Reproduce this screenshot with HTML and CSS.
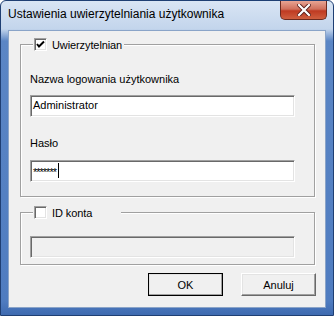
FILE: index.html
```html
<!DOCTYPE html>
<html lang="pl">
<head>
  <meta charset="UTF-8">
  <title>Ustawienia uwierzytelniania użytkownika</title>
  <link rel="stylesheet" href="styles.css">
</head>
<body>
  <div class="window">
    <div class="titlebar">
      <span class="title">Ustawienia uwierzytelniania użytkownika</span>
      <div class="close">
        <svg width="14" height="12" viewBox="0 0 14 12">
          <path d="M2 1 L12 11 M12 1 L2 11" stroke="#5a1e1a" stroke-width="4" stroke-linecap="square"/>
          <path d="M2 1 L12 11 M12 1 L2 11" stroke="#ffffff" stroke-width="2.2" stroke-linecap="square"/>
        </svg>
      </div>
    </div>

    <div class="client">
      <fieldset class="group auth">
        <legend>
          <span class="check">
            <svg width="9" height="9" viewBox="0 0 9 9">
              <path d="M1 4 L3 6.5 L8 1.5" stroke="#000" stroke-width="2" fill="none"/>
            </svg>
          </span>
          <span class="legend-text">Uwierzytelnian</span>
        </legend>
        <label class="caption">Nazwa logowania użytkownika</label>
        <div class="field">Administrator</div>
        <label class="caption second">Hasło</label>
        <div class="field pass"><span class="mask">*******</span><span class="caret"></span></div>
      </fieldset>

      <fieldset class="group account">
        <legend>
          <span class="check"></span>
          <span class="legend-text">ID konta</span>
        </legend>
        <div class="field disabled"></div>
      </fieldset>

      <div class="buttons">
        <button class="btn default">OK</button>
        <button class="btn">Anuluj</button>
      </div>
    </div>
  </div>
</body>
</html>
```

FILE: styles.css
```css
body { margin: 0; background: #ffffff; font-family: "Liberation Sans", Arial, sans-serif; font-size: 11px; color: #000; }

.window { width: 334px; height: 316px; display: flex; flex-direction: column; box-sizing: border-box;
  background: linear-gradient(to bottom, #d9e5f4 0px, #c3d5ec 28px, #5b86c5 40px, #4f7cc0 300px, #3c68ae 316px);
  border: 1px solid #1f3f73; border-radius: 6px 6px 0 0; }

.titlebar { height: 29px; display: flex; align-items: flex-start; padding-left: 7px; flex-shrink: 0; }
.title { font-size: 12px; margin-top: 6px; color: #000; }
.close { margin-left: auto; margin-right: 6px; width: 47px; height: 19px; display: flex; align-items: center; justify-content: center;
  background: linear-gradient(to bottom, #e8a493 0%, #d0705c 45%, #bf3a22 55%, #cf5f3f 100%);
  border: 1px solid #6b2a1f; border-top: none; border-radius: 0 0 5px 5px; box-sizing: border-box; }

.client { flex: 1; margin: 0 7px 7px 7px; background: #f0f0f0; border: 1px solid #8aa4c8; display: flex; flex-direction: column; padding-top: 7px; }

.group { margin: 0 10px 0 11px; padding: 0 19px 14px 9px; border: 1px solid #a0a0a0; box-shadow: inset 1px 1px 0 #fff, 1px 1px 0 #fff; display: flex; flex-direction: column; }
.group legend { display: flex; align-items: center; min-width: 88px; height: 13px; padding: 0 2px 0 1px; margin-left: 3px; white-space: nowrap; background: #f0f0f0; box-sizing: border-box; }
.legend-text { margin-left: 5px; letter-spacing: -0.1px; }

.check { width: 13px; height: 13px; box-sizing: border-box; flex-shrink: 0; background: #fff; display: flex; align-items: center; justify-content: center;
  border: 1px solid; border-color: #a0a0a0 #fff #fff #a0a0a0; box-shadow: inset 1px 1px 0 #696969, inset -1px -1px 0 #e3e3e3; }

.caption { margin-top: 22px; line-height: 13px; }
.caption.second { margin-top: 20px; }

.field { height: 22px; margin-top: 9px; box-sizing: border-box; background: #fff; display: flex; align-items: center; padding: 0 0 2px 2px;
  border: 1px solid; border-color: #a0a0a0 #fff #fff #a0a0a0; box-shadow: inset 1px 1px 0 #696969, inset -1px -1px 0 #e3e3e3; }
.field.pass { margin-top: 10px; }
.field.disabled { background: #f0f0f0; margin-top: 17px; }
.mask { font-size: 11px; letter-spacing: -1px; padding-top: 4px; }
.caret { width: 1px; height: 15px; background: #000; margin-left: 2px; }

.account { margin-top: 9px; padding-bottom: 6px; }

.buttons { display: flex; justify-content: flex-end; gap: 18px; margin: 8px 9px 0 0; }
.btn { width: 75px; height: 23px; box-sizing: border-box; background: #f0f0f0; font: 11px "Liberation Sans", Arial, sans-serif; color: #000; padding: 0;
  border: 1px solid; border-color: #fff #696969 #696969 #fff; box-shadow: inset -1px -1px 0 #a0a0a0, inset 1px 1px 0 #e3e3e3; }
.btn.default { outline: 1px solid #000; outline-offset: -1px; }
```
